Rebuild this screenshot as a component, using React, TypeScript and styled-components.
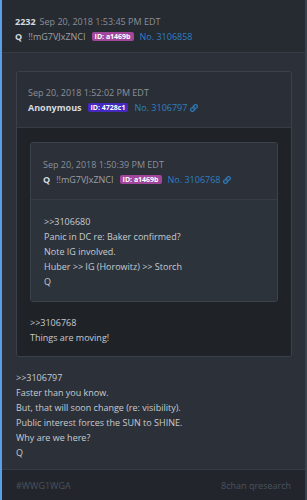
import React from "react";
import styled, { createGlobalStyle } from "styled-components";
import { FaLink } from "react-icons/fa";

const Global = createGlobalStyle`
  html, body { margin: 0; padding: 0; background: #d8dadd; }
  body { font-family: "Open Sans", "Noto Sans", sans-serif; }
  * { box-sizing: border-box; }
`;

const Card = styled.div`
  width: 307px;
  border-left: 2px solid #5a9fe6;
  border-right: 2px solid #3a4049;
  background: #2c3139;
  font-size: 9px;
  line-height: 15px;
  color: #c6cbd1;
`;

const Header = styled.div<{ $bg: string; $pt: number; $pb: number; $px: number }>`
  background: ${(p) => p.$bg};
  padding: ${(p) => `${p.$pt}px ${p.$px}px ${p.$pb}px`};
  border-bottom: 1px solid #363c45;
`;

const MetaLine = styled.div`
  display: flex;
  align-items: center;
  gap: 4px;
  white-space: nowrap;
`;

const Num = styled.span`
  font-weight: 700;
  color: #d6dadf;
`;

const DateText = styled.span`
  color: #8a9099;
`;

const Name = styled.span`
  font-weight: 700;
  color: #d6dadf;
  margin-right: 2px;
`;

const Trip = styled.span`
  color: #9ba1a9;
  margin-right: 2px;
`;

const Badge = styled.span<{ $color: string }>`
  display: inline-flex;
  align-items: center;
  height: 9px;
  padding: 0 3px;
  border-radius: 2px;
  background: ${(p) => p.$color};
  color: #fff;
  font-size: 7px;
  font-weight: 700;
  line-height: 9px;
  margin-right: 2px;
`;

const PostNo = styled.span`
  color: #2f7fc2;
  display: inline-flex;
  align-items: center;
  gap: 3px;
`;

const Body = styled.div<{ $bg: string; $pad: string }>`
  background: ${(p) => p.$bg};
  padding: ${(p) => p.$pad};
`;

const Quote = styled.div<{ $border: string; $mb?: number }>`
  border: 1px solid ${(p) => p.$border};
  border-radius: 3px;
  overflow: hidden;
  margin-bottom: ${(p) => p.$mb ?? 0}px;
`;

const Line = styled.p`
  margin: 0;
`;

const Footer = styled.div`
  display: flex;
  justify-content: space-between;
  align-items: center;
  height: 31px;
  padding: 0 14px 0 14px;
  background: #22262c;
  border-top: 1px solid #363c45;
  color: #4a525e;
`;

const Lines = ({ lines }: { lines: string[] }) => (
  <>
    {lines.map((l, i) => (
      <Line key={i}>{l}</Line>
    ))}
  </>
);

export default function App() {
  return (
    <>
      <Global />
      <Card>
        <Header $bg="#262a31" $pt={14} $pb={8} $px={13}>
          <MetaLine>
            <Num>2232</Num>
            <DateText>Sep 20, 2018 1:53:45 PM EDT</DateText>
          </MetaLine>
          <MetaLine>
            <Name>Q</Name>
            <Trip>!!mG7VJxZNCI</Trip>
            <Badge $color="#a1469b">ID: a1469b</Badge>
            <PostNo>No. 3106858</PostNo>
          </MetaLine>
        </Header>
        <Body $bg="#2c3139" $pad="18px 13px 9px 14px">
          <Quote $border="#3b414b" $mb={13}>
            <Header $bg="#2a2f37" $pt={13} $pb={12} $px={11}>
              <MetaLine>
                <DateText>Sep 20, 2018 1:52:02 PM EDT</DateText>
              </MetaLine>
              <MetaLine>
                <Name>Anonymous</Name>
                <Badge $color="#4728c1">ID: 4728c1</Badge>
                <PostNo>
                  No. 3106797 <FaLink size={8} />
                </PostNo>
              </MetaLine>
            </Header>
            <Body $bg="#1f2227" $pad="14px 13px 11px 13px">
              <Quote $border="#3c424c" $mb={13}>
                <Header $bg="#2b3039" $pt={14} $pb={12} $px={12}>
                  <MetaLine>
                    <DateText>Sep 20, 2018 1:50:39 PM EDT</DateText>
                  </MetaLine>
                  <MetaLine>
                    <Name>Q</Name>
                    <Trip>!!mG7VJxZNCI</Trip>
                    <Badge $color="#a1469b">ID: a1469b</Badge>
                    <PostNo>
                      No. 3106768 <FaLink size={8} />
                    </PostNo>
                  </MetaLine>
                </Header>
                <Body $bg="#2d333b" $pad="14px 13px 12px 13px">
                  <Lines
                    lines={[
                      ">>3106680",
                      "Panic in DC re: Baker confirmed?",
                      "Note IG involved.",
                      "Huber >> IG (Horowitz) >> Storch",
                      "Q",
                    ]}
                  />
                </Body>
              </Quote>
              <Lines lines={[">>3106768", "Things are moving!"]} />
            </Body>
          </Quote>
          <Lines
            lines={[
              ">>3106797",
              "Faster than you know.",
              "But, that will soon change (re: visibility).",
              "Public interest forces the SUN to SHINE.",
              "Why are we here?",
              "Q",
            ]}
          />
        </Body>
        <Footer>
          <span>#WWG1WGA</span>
          <span>8chan qresearch</span>
        </Footer>
      </Card>
    </>
  );
}
